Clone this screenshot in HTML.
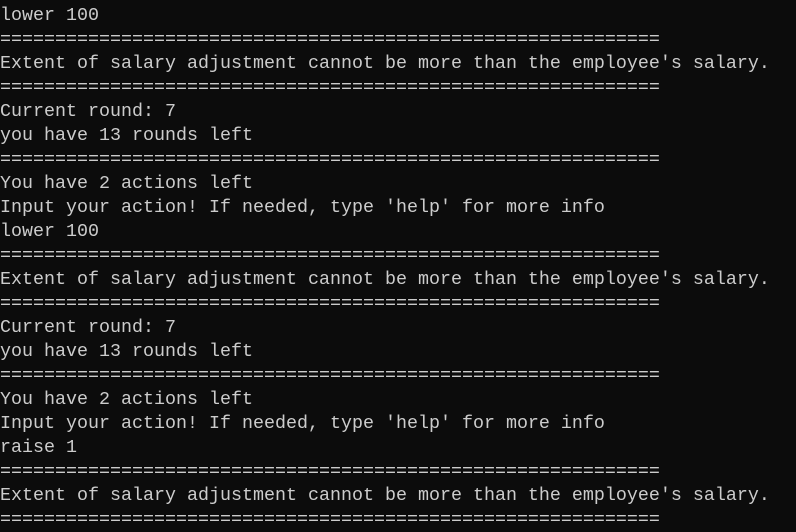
<!DOCTYPE html>
<html><head><style>
html,body{margin:0;padding:0;background:#0c0c0c;width:796px;height:524px;overflow:hidden}
pre{position:absolute;left:0;top:-20px;margin:0;font-family:"Liberation Mono",monospace;font-size:18.33px;line-height:24px;color:#cccccc;white-space:pre}
</style></head><body>
<pre>Input your action! If needed, type 'help' for more info
lower 100
============================================================
Extent of salary adjustment cannot be more than the employee's salary.
============================================================
Current round: 7
you have 13 rounds left
============================================================
You have 2 actions left
Input your action! If needed, type 'help' for more info
lower 100
============================================================
Extent of salary adjustment cannot be more than the employee's salary.
============================================================
Current round: 7
you have 13 rounds left
============================================================
You have 2 actions left
Input your action! If needed, type 'help' for more info
raise 1
============================================================
Extent of salary adjustment cannot be more than the employee's salary.
============================================================</pre>
</body></html>
